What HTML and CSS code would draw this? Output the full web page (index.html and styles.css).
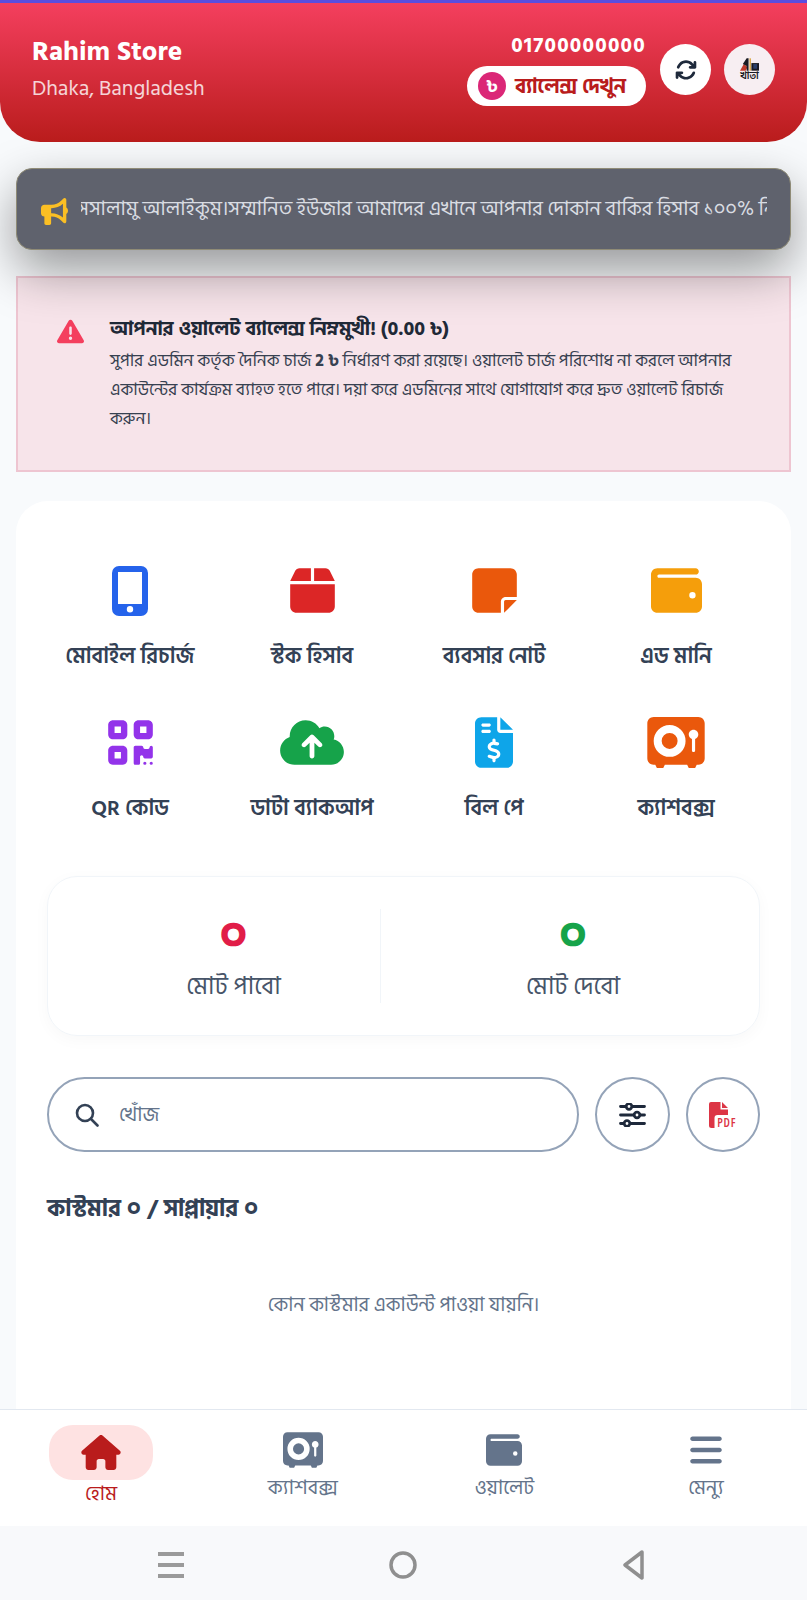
FILE: index.html
```html
<!DOCTYPE html>
<html lang="bn">
<head>
<meta charset="utf-8">
<title>Rahim Store</title>
<link rel="stylesheet" href="styles.css">
</head>
<body>
<div class="screen">
  <header class="header">
    <div class="store">
      <div class="store-name">Rahim Store</div>
      <div class="store-place">Dhaka, Bangladesh</div>
    </div>
    <div class="header-right">
      <div class="account">
        <div class="phone">01700000000</div>
        <div class="balance"><span class="taka">৳</span><span>ব্যালেন্স দেখুন</span></div>
      </div>
      <div class="round-btn"><svg class="refresh" viewBox="0 0 512 512"><path d="M105.1 202.6c7.7-21.8 20.2-42.3 37.8-59.8c62.5-62.5 163.8-62.5 226.3 0L386.3 160H352c-17.7 0-32 14.3-32 32s14.3 32 32 32H463.5c0 0 0 0 0 0h.4c17.7 0 32-14.3 32-32V80c0-17.7-14.3-32-32-32s-32 14.3-32 32v35.2L414.4 97.6c-87.5-87.5-229.3-87.5-316.8 0C73.2 122 55.6 150.7 44.8 181.4c-5.9 16.7 2.9 34.9 19.5 40.8s34.9-2.9 40.8-19.5zM39 289.3c-5 1.5-9.8 4.2-13.7 8.2c-4 4-6.7 8.8-8.1 14c-.3 1.2-.6 2.5-.8 3.8c-.3 1.7-.4 3.4-.4 5.1V432c0 17.7 14.3 32 32 32s32-14.3 32-32V396.9l17.6 17.5 0 0c87.5 87.4 229.3 87.4 316.7 0c24.4-24.4 42.1-53.1 52.9-83.7c5.9-16.7-2.9-34.9-19.5-40.8s-34.9 2.9-40.8 19.5c-7.7 21.8-20.2 42.3-37.8 59.8c-62.5 62.5-163.8 62.5-226.3 0l-.1-.1L125.6 352H160c17.7 0 32-14.3 32-32s-14.3-32-32-32H48.4c-1.6 0-3.2 .1-4.8 .3s-3.1 .5-4.6 1z"/></svg></div>
      <div class="round-btn logo">
        <svg class="logo-art" viewBox="0 0 20 13"><path class="logo-red" d="M0 13 L4 6 L8 9 L6 13Z"/><path class="logo-black" d="M3 6 L7 0 L9 0 L9 13 L7 13 L7 8Z"/><rect class="logo-gold" x="10" y="0" width="1.500" height="13"/><rect class="logo-black" x="12" y="5" width="8" height="8"/><rect class="logo-blue" x="14" y="6" width="4" height="5"/></svg>
        <span class="logo-text">খাতা</span>
      </div>
    </div>
  </header>

  <section class="notice">
    <svg class="bullhorn" viewBox="0 0 512 512"><path d="M480 32c0-12.9-7.8-24.6-19.8-29.6s-25.7-2.2-34.9 6.9L381.7 53c-48 48-113.1 75-181 75H192 160 64c-35.3 0-64 28.7-64 64v96c0 35.3 28.7 64 64 64l0 128c0 17.7 14.3 32 32 32h64c17.7 0 32-14.3 32-32V352l8.7 0c67.9 0 133 27 181 75l43.6 43.6c9.2 9.2 22.9 11.9 34.9 6.9s19.8-16.6 19.8-29.6V300.4c18.6-8.8 32-32.5 32-60.4s-13.4-51.6-32-60.4V32zm-64 76.7V240 371.3C357.2 317.8 280.5 288 200.7 288H192V192h8.7c79.8 0 156.5-29.8 215.3-83.3z"/></svg>
    <div class="marquee"><div class="marquee-text">আসসালামু আলাইকুম।সম্মানিত ইউজার আমাদের এখানে আপনার দোকান বাকির হিসাব ১০০% নিরাপদ থাকবে</div></div>
  </section>

  <section class="alert">
    <svg class="alert-icon" viewBox="0 0 512 512"><path d="M256 32c14.2 0 27.3 7.5 34.5 19.8l216 368c7.3 12.4 7.3 27.7 .2 40.1S486.3 480 472 480H40c-14.3 0-27.6-7.7-34.7-20.1s-7-27.8 .2-40.1l216-368C228.7 39.5 241.8 32 256 32zm0 128c-13.3 0-24 10.7-24 24V296c0 13.3 10.7 24 24 24s24-10.7 24-24V184c0-13.3-10.7-24-24-24zm32 224a32 32 0 1 0 -64 0 32 32 0 1 0 64 0z"/></svg>
    <div class="alert-body">
      <div class="alert-title">আপনার ওয়ালেট ব্যালেন্স নিম্নমুখী! (0.00 ৳)</div>
      <p class="alert-text">সুপার এডমিন কর্তৃক দৈনিক চার্জ <b>2 ৳</b> নির্ধারণ করা রয়েছে। ওয়ালেট চার্জ পরিশোধ না করলে আপনার একাউন্টের কার্যক্রম ব্যাহত হতে পারে। দয়া করে এডমিনের সাথে যোগাযোগ করে দ্রুত ওয়ালেট রিচার্জ করুন।</p>
    </div>
  </section>

  <main class="card">
    <div class="grid">
      <div class="tile"><div class="tile-icon"><svg class="ic-blue" width="36" height="50" viewBox="0 0 36 50"><path fill-rule="evenodd" d="M7 0h22a7 7 0 0 1 7 7v36a7 7 0 0 1-7 7H7a7 7 0 0 1-7-7V7a7 7 0 0 1 7-7zM6 6v32h24V6zM18 40a3.2 3.2 0 1 0 0 6.400a3.200 3.200 0 0 0 0-6.400z"/></svg></div><div class="tile-label">মোবাইল রিচার্জ</div></div>
      <div class="tile"><div class="tile-icon"><svg class="ic-red" width="45" height="51" viewBox="0 0 448 512"><path d="M50.700 58.500L0 160H208V32H93.700C75.500 32 58.900 42.300 50.700 58.500zM240 160H448L397.300 58.500C389.100 42.300 372.500 32 354.300 32H240V160zm208 32H0V416c0 35.300 28.700 64 64 64H384c35.300 0 64-28.700 64-64V192z"/></svg></div><div class="tile-label">স্টক হিসাব</div></div>
      <div class="tile"><div class="tile-icon"><svg class="ic-orange" width="45" height="51" viewBox="0 0 448 512"><path d="M64 32C28.700 32 0 60.700 0 96V416c0 35.300 28.700 64 64 64H288V368c0-26.500 21.500-48 48-48H448V96c0-35.300-28.700-64-64-64H64zM448 352H402.700 336c-8.800 0-16 7.200-16 16v66.700V480l32-32 64-64 32-32z"/></svg></div><div class="tile-label">ব্যবসার নোট</div></div>
      <div class="tile"><div class="tile-icon"><svg class="ic-amber" width="51" height="51" viewBox="0 0 512 512"><path d="M64 32C28.700 32 0 60.700 0 96V416c0 35.300 28.700 64 64 64H448c35.300 0 64-28.700 64-64V192c0-35.300-28.700-64-64-64H80c-8.800 0-16-7.200-16-16s7.200-16 16-16H448c17.700 0 32-14.300 32-32s-14.300-32-32-32H64zM416 272a32 32 0 1 1 0 64 32 32 0 1 1 0-64z"/></svg></div><div class="tile-label">এড মানি</div></div>
      <div class="tile"><div class="tile-icon"><svg class="ic-purple" width="45" height="51" viewBox="0 0 448 512"><path d="M0 80C0 53.500 21.500 32 48 32h96c26.500 0 48 21.500 48 48v96c0 26.500-21.500 48-48 48H48c-26.500 0-48-21.500-48-48V80zM64 96v64h64V96H64zM0 336c0-26.500 21.500-48 48-48h96c26.500 0 48 21.500 48 48v96c0 26.500-21.500 48-48 48H48c-26.500 0-48-21.500-48-48V336zm64 16v64h64V352H64zM304 32h96c26.500 0 48 21.500 48 48v96c0 26.500-21.500 48-48 48H304c-26.500 0-48-21.500-48-48V80c0-26.500 21.500-48 48-48zm80 64H320v64h64V96zM256 304c0-8.800 7.200-16 16-16h64c8.800 0 16 7.200 16 16s7.200 16 16 16h32c8.800 0 16-7.200 16-16s7.200-16 16-16s16 7.200 16 16v96c0 8.800-7.200 16-16 16H368c-8.800 0-16-7.200-16-16s-7.200-16-16-16s-16 7.200-16 16v64c0 8.800-7.200 16-16 16H272c-8.800 0-16-7.200-16-16V304zM368 480a16 16 0 1 1 0-32 16 16 0 1 1 0 32zm64 0a16 16 0 1 1 0-32 16 16 0 1 1 0 32z"/></svg></div><div class="tile-label">QR কোড</div></div>
      <div class="tile"><div class="tile-icon"><svg class="ic-green" width="64" height="51" viewBox="0 0 640 512"><path d="M144 480C64.500 480 0 415.500 0 336c0-62.800 40.200-116.200 96.200-135.900c-.1-2.700-.2-5.400-.2-8.100c0-88.400 71.600-160 160-160c59.300 0 111 32.200 138.700 80.200C409.900 102 428.300 96 448 96c53 0 96 43 96 96c0 12.200-2.300 23.800-6.400 34.600C596 238.400 640 290.100 640 352c0 70.700-57.300 128-128 128H144zm79-217c-9.400 9.400-9.400 24.600 0 33.900s24.600 9.400 33.900 0l39-39V392c0 13.300 10.700 24 24 24s24-10.700 24-24V257.900l39 39c9.400 9.400 24.600 9.400 33.900 0s9.400-24.600 0-33.900l-80-80c-9.400-9.400-24.600-9.400-33.900 0l-80 80z"/></svg></div><div class="tile-label">ডাটা ব্যাকআপ</div></div>
      <div class="tile"><div class="tile-icon"><svg class="ic-sky" width="38" height="51" viewBox="0 0 384 512"><path d="M64 0C28.700 0 0 28.700 0 64V448c0 35.300 28.700 64 64 64H320c35.300 0 64-28.700 64-64V160H256c-17.700 0-32-14.300-32-32V0H64zM256 0V128H384L256 0zM64 80c0-8.800 7.200-16 16-16h64c8.800 0 16 7.200 16 16s-7.200 16-16 16H80c-8.800 0-16-7.200-16-16zm0 64c0-8.800 7.200-16 16-16h64c8.800 0 16 7.200 16 16s-7.200 16-16 16H80c-8.800 0-16-7.200-16-16zm128 72c8.800 0 16 7.200 16 16v17.300c8.500 1.200 16.700 3.100 24.100 5.100c8.500 2.300 13.600 11 11.300 19.600s-11 13.600-19.600 11.300c-11.100-3-22-5.200-32.100-5.300c-8.400-.1-17.400 1.800-23.600 5.500c-5.700 3.400-8.100 7.300-8.100 12.800c0 3.700 1.300 6.500 7.300 10.100c6.900 4.100 16.600 7.100 29.200 10.900l.5 .1 0 0 0 0c11.300 3.400 25.300 7.600 36.300 14.600c12.100 7.600 22.400 19.700 22.700 38.200c.3 19.300-9.600 33.300-22.900 41.600c-7.700 4.800-16.400 7.600-25.100 9.100V440c0 8.800-7.200 16-16 16s-16-7.200-16-16V422.200c-11.200-2.100-21.700-5.700-30.900-8.900l0 0 0 0c-2.100-.7-4.200-1.400-6.200-2.100c-8.400-2.800-12.900-11.900-10.100-20.200s11.900-12.900 20.200-10.100c2.500 .8 4.800 1.600 7.100 2.400l0 0 0 0 0 0c13.600 4.600 24.600 8.400 36.300 8.700c9.100 .3 17.900-1.700 23.700-5.300c5.100-3.200 7.900-7.300 7.800-14c-.1-4.600-1.800-7.800-7.700-11.600c-6.800-4.300-16.500-7.400-29-11.200l-1.600-.5 0 0c-11-3.300-24.300-7.300-34.800-13.700c-12-7.200-22.600-18.900-22.700-37.300c-.1-19.400 10.800-32.800 23.800-40.500c7.500-4.400 15.800-7.200 24.100-8.700V232c0-8.800 7.200-16 16-16z"/></svg></div><div class="tile-label">বিল পে</div></div>
      <div class="tile"><div class="tile-icon"><svg class="ic-orange" width="58" height="51" viewBox="0 0 576 512"><path d="M64 0C28.700 0 0 28.700 0 64V416c0 35.300 28.700 64 64 64H80l16 32h64l16-32H400l16 32h64l16-32h16c35.300 0 64-28.700 64-64V64c0-35.300-28.700-64-64-64H64zM224 320a80 80 0 1 0 0-160 80 80 0 1 0 0 160zm0-240a160 160 0 1 1 0 320 160 160 0 1 1 0-320zM480 221.300V336c0 8.800-7.200 16-16 16s-16-7.200-16-16V221.300c-18.700-6.600-32-24.400-32-45.300c0-26.500 21.500-48 48-48s48 21.500 48 48c0 20.900-13.300 38.700-32 45.300z"/></svg></div><div class="tile-label">ক্যাশবক্স</div></div>
    </div>

    <div class="stats">
      <div class="stat stat-left"><div class="stat-value stat-red">০</div><div class="stat-label">মোট পাবো</div></div>
      <div class="stat stat-right"><div class="stat-value stat-green">০</div><div class="stat-label">মোট দেবো</div></div>
    </div>

    <div class="search-row">
      <div class="search">
        <svg class="search-icon" viewBox="0 0 24 24"><circle cx="10" cy="10" r="8"/><path d="M16 16l6.500 6.500"/></svg>
        <span class="search-hint">খোঁজ</span>
      </div>
      <div class="circle-btn"><svg class="sliders" viewBox="0 0 27 24"><path d="M1.500 3.500h24M1.500 12h24M1.500 20.500h24"/><circle cx="10" cy="3.500" r="2.800"/><circle cx="18" cy="12" r="2.800"/><circle cx="8" cy="20.500" r="2.800"/></svg></div>
      <div class="circle-btn">
        <div class="pdf">
          <svg class="pdf-sheet" viewBox="0 0 19 26"><path d="M2 0H11.500V7.500H19V13H8.500A3 3 0 0 0 5.500 16V26H2.500A2.500 2.500 0 0 1 0 23.500V2A2 2 0 0 1 2 0ZM13 0L19 6H13Z"/></svg>
          <span class="pdf-text">PDF</span>
        </div>
      </div>
    </div>

    <h2 class="count">কাস্টমার ০ / সাপ্লায়ার ০</h2>
    <p class="empty">কোন কাস্টমার একাউন্ট পাওয়া যায়নি।</p>
  </main>

  <nav class="nav">
    <div class="nav-item active"><div class="nav-pill"><svg width="40" height="35" viewBox="0 0 576 512"><path d="M575.800 255.500c0 18-15 32.100-32 32.100h-32l.7 160.200c0 2.700-.2 5.400-.5 8.100V472c0 22.100-17.900 40-40 40H456c-1.100 0-2.200 0-3.300-.1c-1.400 .1-2.800 .1-4.200 .1H416 392c-22.100 0-40-17.900-40-40V448 384c0-17.700-14.300-32-32-32H256c-17.700 0-32 14.300-32 32v64 24c0 22.100-17.900 40-40 40H160 128.100c-1.500 0-3-.1-4.500-.2c-1.200 .1-2.400 .2-3.600 .2H104c-22.100 0-40-17.900-40-40V360c0-.9 0-1.900 .1-2.800V287.600H32c-18 0-32-14-32-32.100c0-9 3-17 10-24L266.400 8c7-7 15-8 22-8s15 2 21 7L564.800 231.500c8 7 12 15 11 24z"/></svg></div><span>হোম</span></div>
    <div class="nav-item"><div class="nav-ic"><svg width="40" height="36" viewBox="0 0 576 512"><path d="M64 0C28.700 0 0 28.700 0 64V416c0 35.300 28.700 64 64 64H80l16 32h64l16-32H400l16 32h64l16-32h16c35.300 0 64-28.700 64-64V64c0-35.300-28.700-64-64-64H64zM224 320a80 80 0 1 0 0-160 80 80 0 1 0 0 160zm0-240a160 160 0 1 1 0 320 160 160 0 1 1 0-320zM480 221.300V336c0 8.800-7.200 16-16 16s-16-7.200-16-16V221.300c-18.700-6.600-32-24.400-32-45.300c0-26.500 21.500-48 48-48s48 21.500 48 48c0 20.900-13.300 38.700-32 45.300z"/></svg></div><span>ক্যাশবক্স</span></div>
    <div class="nav-item"><div class="nav-ic"><svg width="36" height="36" viewBox="0 0 512 512"><path d="M64 32C28.700 32 0 60.700 0 96V416c0 35.300 28.700 64 64 64H448c35.300 0 64-28.700 64-64V192c0-35.300-28.700-64-64-64H80c-8.800 0-16-7.200-16-16s7.200-16 16-16H448c17.700 0 32-14.300 32-32s-14.300-32-32-32H64zM416 272a32 32 0 1 1 0 64 32 32 0 1 1 0-64z"/></svg></div><span>ওয়ালেট</span></div>
    <div class="nav-item"><div class="nav-ic"><svg width="32" height="36" viewBox="0 0 448 512"><path d="M0 96C0 78.300 14.300 64 32 64H416c17.700 0 32 14.300 32 32s-14.300 32-32 32H32C14.300 128 0 113.700 0 96zM0 256c0-17.700 14.300-32 32-32H416c17.700 0 32 14.300 32 32s-14.300 32-32 32H32c-17.700 0-32-14.300-32-32zM448 416c0 17.700-14.300 32-32 32H32c-17.700 0-32-14.300-32-32s14.300-32 32-32H416c17.700 0 32 14.300 32 32z"/></svg></div><span>মেন্যু</span></div>
  </nav>

  <div class="system-bar">
    <svg class="sys" viewBox="0 0 30 30"><path class="sys-fill" d="M2 2h26v4H2zM2 13h26v4H2zM2 24h26v4H2z"/></svg>
    <svg class="sys" viewBox="0 0 30 30"><circle class="sys-line" cx="15" cy="15" r="12"/></svg>
    <svg class="sys" viewBox="0 0 30 30"><path class="sys-line" d="M23 2 L6 15 L23 28Z"/></svg>
  </div>
</div>
</body>
</html>
```
FILE: styles.css
```css
* { box-sizing: border-box; }
html, body { margin: 0; padding: 0; }
body {
  font-family: "Hind Siliguri", "Noto Sans", sans-serif;
  background: #f8fafc;
  color: #1f2937;
}
.screen {
  width: 807px;
  height: 1600px;
  overflow: hidden;
  display: flex;
  flex-direction: column;
}
.header {
  height: 142px;
  flex: none;
  border-top: 3px solid #5b4de0;
  border-radius: 0 0 40px 40px;
  background: linear-gradient(180deg, #f43f5e 0%, #b91c1c 100%);
  padding: 0 32px;
  display: flex;
  justify-content: space-between;
  align-items: flex-start;
  position: relative;
  z-index: 2;
}
.store { padding-top: 33px; color: #fff; }
.store-name { font-size: 27.500px; font-weight: 700; line-height: 32px; }
.store-place { font-size: 21.500px; line-height: 26px; margin-top: 8px; opacity: .8; }
.header-right { display: flex; gap: 13px; align-items: flex-start; padding-top: 31px; }
.account { display: flex; flex-direction: column; align-items: flex-end; margin-right: 1px; }
.phone { color: #fff; font-size: 21px; font-weight: 700; line-height: 24px; letter-spacing: 1.200px; }
.balance {
  margin-top: 8px;
  height: 40px;
  width: 179px;
  border-radius: 20px;
  background: #fff;
  color: #b91c1c;
  font-size: 20.700px;
  font-weight: 700;
  display: flex;
  align-items: center;
  gap: 9px;
  padding-left: 11px;
}
.taka {
  width: 28px;
  height: 28px;
  border-radius: 50%;
  background: #db2777;
  color: #fff;
  font-size: 18px;
  display: flex;
  align-items: center;
  justify-content: center;
}
.round-btn {
  width: 51px;
  height: 51px;
  border-radius: 50%;
  background: #fff;
  display: flex;
  flex-direction: column;
  align-items: center;
  justify-content: center;
  margin-top: 10px;
}
.refresh { width: 22px; height: 22px; fill: #1e293b; }
.logo { background: #f7eef2; }
.logo-art { width: 19px; height: 13px; }
.logo-black { fill: #1a1a22; }
.logo-red { fill: #c0392b; }
.logo-blue { fill: #2b3f6a; }
.logo-gold { fill: #d9a441; }
.logo-text { font-size: 10px; line-height: 10px; font-weight: 600; color: #1a1a22; }

.notice {
  margin: 26px 16px 0;
  height: 82px;
  flex: none;
  border-radius: 16px;
  background: #5f626d;
  border: 1px solid #8f8b76;
  box-shadow: 0 20px 50px rgba(0, 0, 0, .4);
  display: flex;
  align-items: center;
  padding-left: 24px;
  padding-right: 23px;
  position: relative;
  z-index: 1;
}
.bullhorn { width: 27px; height: 27px; fill: #fbbf24; flex: none; transform: translateY(2px); }
.marquee { flex: 1; overflow: hidden; margin-left: 13px; }
.marquee-text {
  white-space: nowrap;
  color: #d9dce2;
  font-size: 20.200px;
  line-height: 30px;
  margin-left: -27px;
}

.alert {
  margin: 26px 16px 0;
  height: 196px;
  flex: none;
  background: #f7e4ea;
  border: 2px solid #eec5d1;
  padding: 38px 42px 0 39px;
  display: flex;
  gap: 26px;
  align-items: flex-start;
}
.alert-icon { width: 27px; height: 27px; fill: #f43f5e; flex: none; margin-top: 2px; }
.alert-title { font-size: 19.800px; font-weight: 700; line-height: 26px; color: #1f2937; }
.alert-text { margin: 5px 0 0; font-size: 17.200px; line-height: 29px; color: #374151; }

.card {
  margin: 29px 16px 0;
  flex: 1;
  background: #fff;
  border-radius: 32px 32px 0 0;
  padding: 0 31px;
  min-height: 0;
}
.grid {
  display: grid;
  grid-template-columns: repeat(4, 182px);
  margin: 0 -8px;
  padding-top: 64px;
  row-gap: 46px;
}
.tile { display: flex; flex-direction: column; align-items: center; }
.tile-icon { height: 51px; display: flex; align-items: center; justify-content: center; }
.tile-label { margin-top: 27px; font-size: 21.800px; font-weight: 600; line-height: 28px; color: #334155; white-space: nowrap; }
.ic-blue { fill: #2563eb; }
.ic-red { fill: #dc2626; }
.ic-orange { fill: #ea580c; }
.ic-amber { fill: #f59e0b; }
.ic-purple { fill: #9333ea; }
.ic-green { fill: #16a34a; }
.ic-sky { fill: #0ea5e9; }

.stats {
  margin-top: 53px;
  height: 160px;
  border: 1px solid #f1f5f9;
  border-radius: 30px;
  box-shadow: 0 4px 16px rgba(15, 23, 42, .03);
  display: grid;
  grid-template-columns: 332px 1fr;
  padding: 32px 0;
}
.stat { display: flex; flex-direction: column; align-items: center; }
.stat-left { padding-left: 39px; }
.stat-right { padding-left: 6px; border-left: 1px solid #f1f5f9; }
.stat-value { font-size: 47px; font-weight: 700; line-height: 54px; }
.stat-red { color: #e11d48; }
.stat-green { color: #16a34a; }
.stat-label { margin-top: 8px; font-size: 24.700px; line-height: 30px; color: #475569; }

.search-row { display: flex; gap: 16px; margin-top: 41px; }
.search {
  flex: 1;
  height: 75px;
  border: 2px solid #94a3b8;
  border-radius: 38px;
  display: flex;
  align-items: center;
  padding-left: 26px;
  gap: 20px;
}
.search-icon { width: 24px; height: 24px; fill: none; stroke: #334155; stroke-width: 2.600; stroke-linecap: round; }
.search-hint { font-size: 20px; color: #64748b; }
.circle-btn {
  width: 74.500px;
  height: 75px;
  border: 2px solid #94a3b8;
  border-radius: 50%;
  display: flex;
  align-items: center;
  justify-content: center;
  flex: none;
}
.sliders { width: 27px; height: 24px; fill: #fff; stroke: #1e293b; stroke-width: 2.800; stroke-linecap: round; }
.pdf { position: relative; width: 27px; height: 26px; }
.pdf-sheet { width: 19px; height: 26px; fill: #dc3545; display: block; }
.pdf-text { position: absolute; left: 8px; top: 15px; font-family: "Open Sans", sans-serif; font-stretch: 75%; font-size: 12px; line-height: 11px; font-weight: 600; color: #dc3545; letter-spacing: .8px; }

.count { margin: 41px 0 0; font-size: 23.500px; font-weight: 700; line-height: 32px; color: #334155; }
.empty { margin: 66px 0 0; text-align: center; font-size: 19.800px; line-height: 28px; color: #64748b; }

.nav {
  height: 117px;
  flex: none;
  background: #fff;
  border-top: 1px solid #e2e8f0;
  display: flex;
  align-items: flex-start;
  padding: 0 49px 0 49px;
  justify-content: space-between;
}
.nav-item {
  width: 104px;
  display: flex;
  flex-direction: column;
  align-items: center;
  font-size: 20px;
  line-height: 28px;
  color: #64748b;
  fill: #64748b;
  white-space: nowrap;
  padding-top: 15px;
}
.nav-ic { height: 49px; display: flex; align-items: center; justify-content: center; }
.nav-pill {
  width: 104px;
  height: 55px;
  border-radius: 24px;
  background: #fee2e2;
  display: flex;
  align-items: center;
  justify-content: center;
}
.active { color: #b91c1c; fill: #b91c1c; }

.system-bar {
  height: 74px;
  flex: none;
  background: #f8f9fb;
  display: flex;
  align-items: center;
  justify-content: space-between;
  padding: 3px 158px 0 156px;
}
.sys { width: 30px; height: 30px; }
.sys-fill { fill: #9a9a9a; }
.sys-line { fill: none; stroke: #8f8f8f; stroke-width: 3.500; stroke-linejoin: round; }
```
